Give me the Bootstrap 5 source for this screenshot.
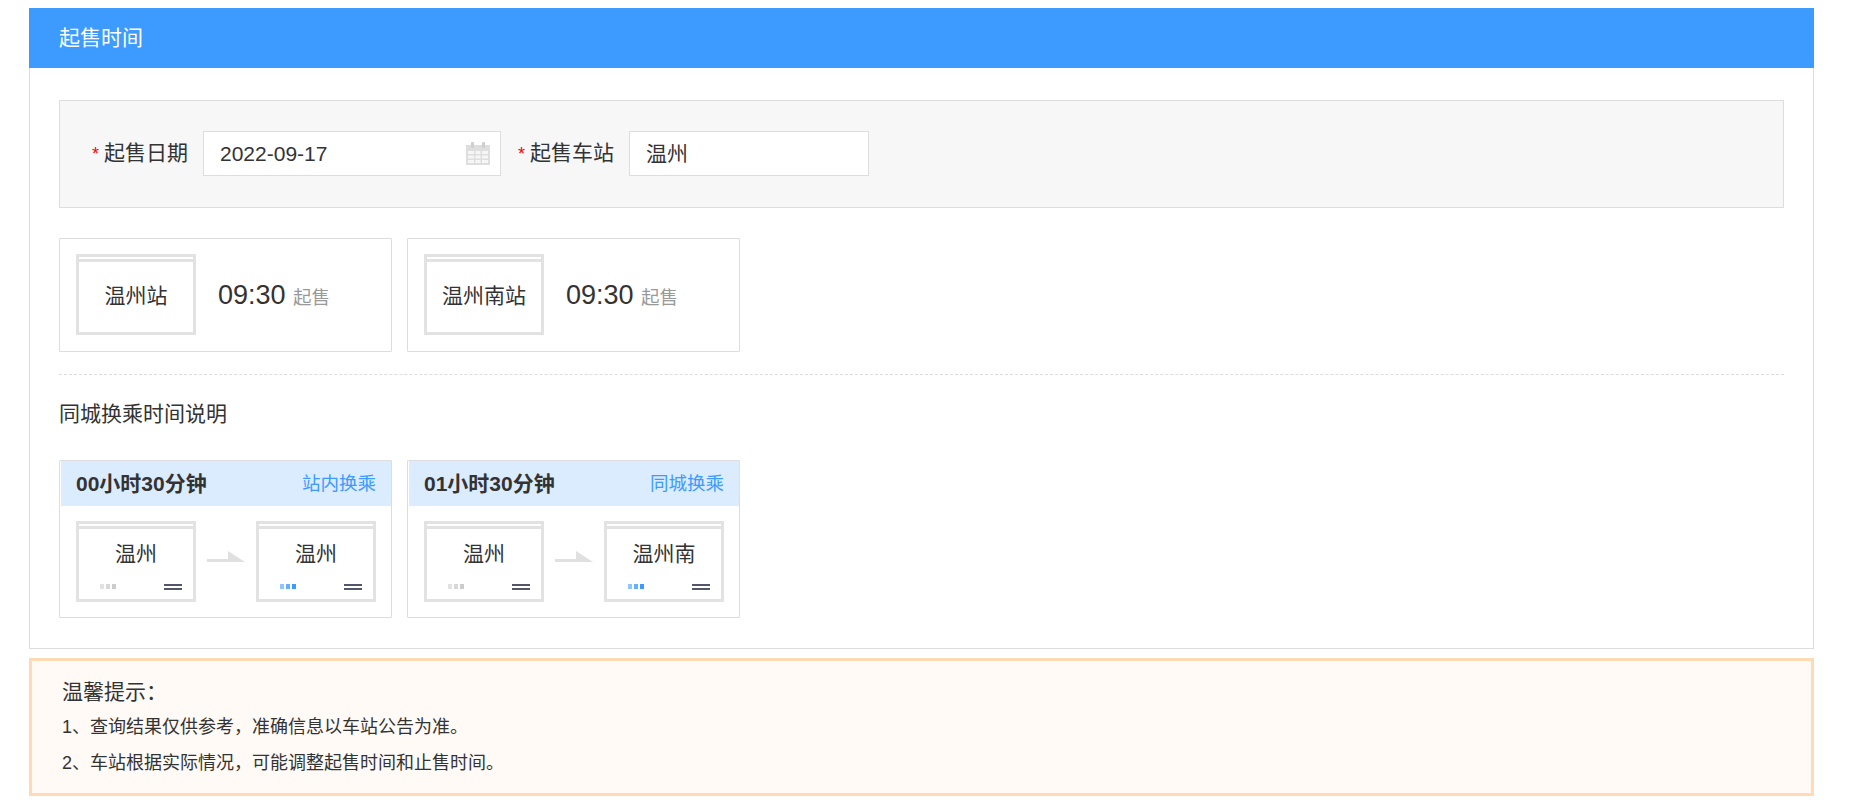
<!DOCTYPE html>
<html lang="zh-CN">
<head>
    <meta charset="UTF-8">
    <meta name="viewport" content="width=device-width, initial-scale=1.0">
    <title>起售时间</title>
    <link rel="stylesheet" href="https://cdn.jsdelivr.net/npm/bootstrap@5.3.2/dist/css/bootstrap.min.css">
    <style>
        body {
            background-color: #fff;
            color: #333;
            font-family: "Liberation Sans", "Noto Sans CJK SC", sans-serif;
            font-size: 18px;
        }

        .page-wrap {
            margin: 8px 37px 0 29px;
        }

        .sale-panel {
            border: 1px solid #ddd;
            border-top: 0;
            background: #fff;
            height: 641px;
        }

        .sale-head {
            height: 60px;
            margin: 0 -1px;
            padding-left: 30px;
            background: #3d9aff;
            color: #fff;
            font-size: 21px;
            line-height: 60px;
        }

        .sale-body {
            padding: 32px 29px 0;
        }

        .query-box {
            height: 108px;
            padding: 0 32px 2px;
            background: #f7f7f7;
            border: 1px solid #ddd;
        }

        .query-label {
            font-size: 21px;
            margin-right: 15px;
            white-space: nowrap;
        }

        .query-label i {
            color: #f00;
            font-style: normal;
            font-size: 18px;
            margin-right: 5px;
        }

        .query-input {
            position: relative;
            height: 45px;
            line-height: 43px;
            padding-left: 16px;
            background: #fff;
            border: 1px solid #ddd;
            font-size: 21px;
        }

        .date-input { width: 298px; margin-right: 17px; }
        .city-input { width: 240px; }

        .date-input svg {
            position: absolute;
            right: 9px;
            top: 9px;
        }

        .card-line {
            gap: 15px;
        }

        .time-line {
            margin-top: 30px;
        }

        .time-box {
            width: 333px;
            height: 114px;
            padding: 15px 16px;
            border: 1px solid #ddd;
            border-radius: 1px;
        }

        .station-pic {
            position: relative;
            flex: none;
            width: 120px;
            height: 81px;
            border: 3px solid #e2e2e2;
            text-align: center;
            font-size: 21px;
        }

        .station-pic::before {
            content: "";
            position: absolute;
            left: 0;
            right: 0;
            top: 2px;
            height: 3px;
            background: #e2e2e2;
        }

        .time-box .station-pic {
            margin-bottom: 1px;
            line-height: 78px;
        }

        .clock {
            margin-left: 22px;
            font-size: 27px;
            line-height: 1;
        }

        .clock small {
            color: #999;
            font-size: 18.500px;
        }

        .dash-line {
            margin: 22px 0 0;
            border-top: 1px dashed #ddd;
        }

        .sub-title {
            margin: 24px 0 31px;
            font-size: 21px;
            line-height: 30px;
        }

        .transfer-box {
            width: 333px;
            height: 158px;
            padding-left: 1px;
            border: 1px solid #ddd;
            border-radius: 1px;
        }

        .transfer-head {
            height: 45px;
            padding: 0 15px;
            background: #dbecff;
        }

        .transfer-head b {
            font-size: 21px;
        }

        .transfer-head span {
            color: #3d9aff;
            font-size: 18.500px;
        }

        .transfer-map {
            padding: 15px 15px 0;
        }

        .transfer-map svg {
            margin-bottom: 10px;
        }

        .transfer-map .station-pic {
            padding-top: 15px;
            line-height: 30px;
        }

        .dots {
            position: absolute;
            left: 21px;
            bottom: 10px;
            gap: 2px;
        }

        .dots u {
            display: block;
            width: 4px;
            height: 5px;
            background: #e2e2e2;
        }

        .dots u:nth-child(2) { background: #d8d8d8; }
        .dots u:nth-child(3) { background: #ccc; }
        .dots.on u:nth-child(1) { background: #90c6ff; }
        .dots.on u:nth-child(2) { background: #64afff; }
        .dots.on u:nth-child(3) { background: #3d9aff; }

        .bars {
            position: absolute;
            right: 11px;
            bottom: 9px;
            width: 18px;
            height: 6px;
            border-top: 2px solid #55556a;
            border-bottom: 2px solid #55556a;
        }

        .tip-box {
            height: 138px;
            margin-top: 9px;
            padding: 15px 27px 0 30px;
            background: #fffaf6;
            border: 3px solid #ffdbb5;
        }

        .tip-title {
            font-size: 21px;
            line-height: 32px;
            margin-bottom: 1px;
        }

        .tip-box p {
            margin: 0;
            font-size: 18px;
            line-height: 36px;
        }
    </style>
</head>
<body>
    <div class="page-wrap">
        <div class="sale-panel">
            <div class="sale-head">起售时间</div>
            <div class="sale-body">
                <div class="query-box d-flex align-items-center">
                    <span class="query-label"><i>*</i>起售日期</span>
                    <div class="query-input date-input">2022-09-17
                        <svg width="26" height="25" viewBox="0 0 26 25">
                            <rect x="1" y="4" width="24" height="20" fill="#dedede"/>
                            <rect x="6" y="1" width="3" height="6" rx="1" fill="#cfcfcf"/>
                            <rect x="17" y="1" width="3" height="6" rx="1" fill="#cfcfcf"/>
                            <path d="M3 10h6v3H3zM10.500 10h5v3h-5zM17 10h6v3h-6zM3 14.500h6v3H3zM10.500 14.500h5v3h-5zM17 14.500h6v3h-6zM3 19h6v3H3zM10.500 19h5v3h-5zM17 19h6v3h-6z" fill="#f6f6f6"/>
                        </svg>
                    </div>
                    <span class="query-label"><i>*</i>起售车站</span>
                    <div class="query-input city-input">温州</div>
                </div>

                <div class="card-line time-line d-flex">
                    <div class="time-box d-flex align-items-center">
                        <div class="station-pic">温州站</div>
                        <div class="clock">09:30 <small>起售</small></div>
                    </div>
                    <div class="time-box d-flex align-items-center">
                        <div class="station-pic">温州南站</div>
                        <div class="clock">09:30 <small>起售</small></div>
                    </div>
                </div>

                <div class="dash-line"></div>
                <div class="sub-title">同城换乘时间说明</div>

                <div class="card-line d-flex">
                    <div class="transfer-box">
                        <div class="transfer-head d-flex justify-content-between align-items-center">
                            <b>00小时30分钟</b><span>站内换乘</span>
                        </div>
                        <div class="transfer-map d-flex justify-content-between align-items-center">
                            <div class="station-pic">温州
                                <div class="dots d-flex"><u></u><u></u><u></u></div><div class="bars"></div>
                            </div>
                            <svg width="38" height="11" viewBox="0 0 38 11"><path d="M0 8h21V0l17 11H0z" fill="#e0e0e0"/></svg>
                            <div class="station-pic">温州
                                <div class="dots on d-flex"><u></u><u></u><u></u></div><div class="bars"></div>
                            </div>
                        </div>
                    </div>
                    <div class="transfer-box">
                        <div class="transfer-head d-flex justify-content-between align-items-center">
                            <b>01小时30分钟</b><span>同城换乘</span>
                        </div>
                        <div class="transfer-map d-flex justify-content-between align-items-center">
                            <div class="station-pic">温州
                                <div class="dots d-flex"><u></u><u></u><u></u></div><div class="bars"></div>
                            </div>
                            <svg width="38" height="11" viewBox="0 0 38 11"><path d="M0 8h21V0l17 11H0z" fill="#e0e0e0"/></svg>
                            <div class="station-pic">温州南
                                <div class="dots on d-flex"><u></u><u></u><u></u></div><div class="bars"></div>
                            </div>
                        </div>
                    </div>
                </div>
            </div>
        </div>

        <div class="tip-box">
            <div class="tip-title">温馨提示：</div>
            <p>1、查询结果仅供参考，准确信息以车站公告为准。</p>
            <p>2、车站根据实际情况，可能调整起售时间和止售时间。</p>
        </div>
    </div>
</body>
</html>
